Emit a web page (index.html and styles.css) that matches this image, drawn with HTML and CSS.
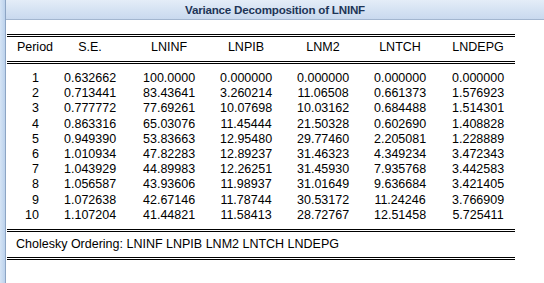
FILE: index.html
```html
<!DOCTYPE html>
<html>
<head>
<meta charset="utf-8">
<link rel="stylesheet" href="styles.css">
</head>
<body>
<div class="frame">
  <div class="side"></div>
  <div class="main">
    <div class="titlebar">Variance Decomposition of LNINF</div>
    <div class="table">
      <div class="dbl"></div>
      <div class="row head">
        <div class="c0">Period</div>
        <div class="c c1"><span>S.E.</span></div>
        <div class="c c2"><span>LNINF</span></div>
        <div class="c c3"><span>LNPIB</span></div>
        <div class="c c4"><span>LNM2</span></div>
        <div class="c c5"><span>LNTCH</span></div>
        <div class="c c6"><span>LNDEPG</span></div>
      </div>
      <div class="dbl"></div>
      <div class="body">
        <div class="row"><div class="c0 n">1</div><div class="c c1"><span>0.632662</span></div><div class="c c2"><span>100.0000</span></div><div class="c c3"><span>0.000000</span></div><div class="c c4"><span>0.000000</span></div><div class="c c5"><span>0.000000</span></div><div class="c c6"><span>0.000000</span></div></div>
        <div class="row"><div class="c0 n">2</div><div class="c c1"><span>0.713441</span></div><div class="c c2"><span>83.43641</span></div><div class="c c3"><span>3.260214</span></div><div class="c c4"><span>11.06508</span></div><div class="c c5"><span>0.661373</span></div><div class="c c6"><span>1.576923</span></div></div>
        <div class="row"><div class="c0 n">3</div><div class="c c1"><span>0.777772</span></div><div class="c c2"><span>77.69261</span></div><div class="c c3"><span>10.07698</span></div><div class="c c4"><span>10.03162</span></div><div class="c c5"><span>0.684488</span></div><div class="c c6"><span>1.514301</span></div></div>
        <div class="row"><div class="c0 n">4</div><div class="c c1"><span>0.863316</span></div><div class="c c2"><span>65.03076</span></div><div class="c c3"><span>11.45444</span></div><div class="c c4"><span>21.50328</span></div><div class="c c5"><span>0.602690</span></div><div class="c c6"><span>1.408828</span></div></div>
        <div class="row"><div class="c0 n">5</div><div class="c c1"><span>0.949390</span></div><div class="c c2"><span>53.83663</span></div><div class="c c3"><span>12.95480</span></div><div class="c c4"><span>29.77460</span></div><div class="c c5"><span>2.205081</span></div><div class="c c6"><span>1.228889</span></div></div>
        <div class="row"><div class="c0 n">6</div><div class="c c1"><span>1.010934</span></div><div class="c c2"><span>47.82283</span></div><div class="c c3"><span>12.89237</span></div><div class="c c4"><span>31.46323</span></div><div class="c c5"><span>4.349234</span></div><div class="c c6"><span>3.472343</span></div></div>
        <div class="row"><div class="c0 n">7</div><div class="c c1"><span>1.043929</span></div><div class="c c2"><span>44.89983</span></div><div class="c c3"><span>12.26251</span></div><div class="c c4"><span>31.45930</span></div><div class="c c5"><span>7.935768</span></div><div class="c c6"><span>3.442583</span></div></div>
        <div class="row"><div class="c0 n">8</div><div class="c c1"><span>1.056587</span></div><div class="c c2"><span>43.93606</span></div><div class="c c3"><span>11.98937</span></div><div class="c c4"><span>31.01649</span></div><div class="c c5"><span>9.636684</span></div><div class="c c6"><span>3.421405</span></div></div>
        <div class="row"><div class="c0 n">9</div><div class="c c1"><span>1.072638</span></div><div class="c c2"><span>42.67146</span></div><div class="c c3"><span>11.78744</span></div><div class="c c4"><span>30.53172</span></div><div class="c c5"><span>11.24246</span></div><div class="c c6"><span>3.766909</span></div></div>
        <div class="row"><div class="c0 n">10</div><div class="c c1"><span>1.107204</span></div><div class="c c2"><span>41.44821</span></div><div class="c c3"><span>11.58413</span></div><div class="c c4"><span>28.72767</span></div><div class="c c5"><span>12.51458</span></div><div class="c c6"><span>5.725411</span></div></div>
      </div>
      <div class="dbl"></div>
      <div class="note">Cholesky Ordering: LNINF LNPIB LNM2 LNTCH LNDEPG</div>
      <div class="dbl"></div>
    </div>
  </div>
</div>
</body>
</html>
```
FILE: styles.css
```css
html, body {
  margin: 0;
  padding: 0;
  background: #ffffff;
}
body {
  font-family: "Liberation Sans", Arial, sans-serif;
  font-size: 12.5px;
  color: #000;
}
.frame {
  display: flex;
  width: 544px;
  height: 283px;
  overflow: hidden;
}
.side {
  width: 5px;
  flex: none;
  background: linear-gradient(90deg, #d5e4f5, #bcd2ec);
  border-right: 1px solid #8da5c4;
}
.main {
  flex: 1;
  display: flex;
  flex-direction: column;
  padding-left: 1px;
}
.titlebar {
  height: 19px;
  margin-left: -1px;
  border-bottom: 1px solid #a3b6cf;
  background: linear-gradient(180deg, #e4edf8 0%, #d6e3f3 50%, #c9d9ee 100%);
  color: #1e3557;
  font-weight: bold;
  font-size: 11.6px;
  letter-spacing: -0.2px;
  line-height: 19px;
  text-align: center;
  padding-right: 0;
}
.table {
  width: 508px;
  margin-top: 14px;
}
.dbl {
  height: 1px;
  border-top: 1px solid #000;
  border-bottom: 1px solid #000;
}
.row {
  display: grid;
  grid-template-columns: 56px 53px 79px 77px 77px 77px 78px;
  line-height: 15.2px;
  white-space: nowrap;
}
.row.head {
  line-height: 14px;
  padding: 3px 0 7px;
}
.c0 {
  text-align: center;
}
.c0.n {
  text-align: right;
  padding-right: 24px;
}
.c {
  display: flex;
  justify-content: flex-end;
}
.c span {
  display: inline-block;
  width: 52px;
  text-align: center;
}
.body {
  padding: 7px 0 6px;
}
.note {
  line-height: 14px;
  padding: 5px 0 6px 9px;
}
```
